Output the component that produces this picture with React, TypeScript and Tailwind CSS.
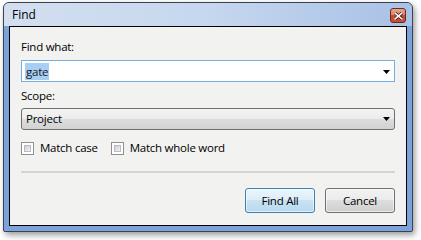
import React from 'react';

const font = { fontFamily: '"Open Sans", "Noto Sans", sans-serif' };

const Caret = () => (
  <svg width="7" height="4" viewBox="0 0 7 4" className="shrink-0">
    <path d="M0 0h7L3.5 4z" fill="#000" />
  </svg>
);

const CheckBox = ({ label }: { label: string }) => (
  <label className="flex items-center gap-[6px]">
    <span className="w-[13px] h-[13px] border border-[#8e8f8f] bg-white p-[2px] flex">
      <span className="flex-1 border border-[#b8bcc2] bg-gradient-to-br from-[#c9cdd3] to-[#f4f4f4]" />
    </span>
    <span className="text-[11.5px] tracking-[-0.25px] leading-[16px] text-black">{label}</span>
  </label>
);

export default function App() {
  return (
    <div className="w-[421px] h-[240px] bg-white pt-[2px] pl-[3px]" style={font}>
      <div className="w-[410px] h-[230px] border border-[#3a4250] rounded-t-[6px] rounded-b-[2px] bg-[#7ca2d9] shadow-[2px_3px_6px_rgba(0,0,0,0.4)] flex flex-col overflow-hidden">
        {/* title bar */}
        <div className="h-[23px] flex items-start pl-[8px] pr-[6px] bg-gradient-to-r from-[#d3dff0] via-[#c6d7ee] to-[#a9c1e6]">
          <span className="text-[12px] leading-[16px] text-black mt-[4px]">Find</span>
          <div className="ml-auto mt-[5px] w-[16px] h-[15px] rounded-[3px] border border-[#6a2b1f] bg-[linear-gradient(#eba58f,#de7a60_50%,#cc4a2e_50%,#c94f33)] flex items-center justify-center">
            <svg width="9" height="8" viewBox="0 0 9 8">
              <path d="M1 1l7 6M8 1L1 7" stroke="#3a1a12" strokeWidth="3" strokeLinecap="square" />
              <path d="M1 1l7 6M8 1L1 7" stroke="#fff" strokeWidth="1.6" strokeLinecap="square" />
            </svg>
          </div>
        </div>
        {/* client */}
        <div className="flex-1 px-[5px] pb-[5px]">
          <div className="h-full border border-black bg-[#f2f2f0] px-[11px] pt-[12px] flex flex-col text-[11.5px] tracking-[-0.25px]">
            <div className="leading-[16px] text-black">Find what:</div>
            <div className="mt-[5px] h-[22px] border border-[#76acdf] bg-white flex items-center pl-[3px] pr-[3px]">
              <span className="leading-[17px] bg-[#a8cef1] text-[#101828] px-[1px]">gate</span>
              <div className="ml-auto mr-[1px] mt-[1px]"><Caret /></div>
            </div>
            <div className="mt-[6px] leading-[16px] text-black">Scope:</div>
            <div className="mt-[4px] h-[22px] rounded-[3px] border border-[#707070] bg-[linear-gradient(#f4f4f4,#ebebeb_50%,#dddddd_50%,#d2d2d2)] flex items-center pl-[4px] pr-[4px]">
              <span className="leading-[16px] text-black">Project</span>
              <div className="ml-auto"><Caret /></div>
            </div>
            <div className="mt-[10px] flex items-center gap-[13px]">
              <CheckBox label="Match case" />
              <CheckBox label="Match whole word" />
            </div>
            <div className="mt-[15px] h-[2px] bg-[#d4d4d2]" />
            <div className="mt-[15px] flex justify-end gap-[10px]">
              <button className="w-[70px] h-[25px] rounded-[3px] border border-[#3c7fb1] bg-[linear-gradient(#eaf5fc,#dcedf9_50%,#c8e2f4_50%,#b8d8ee)] text-black shadow-[inset_0_0_0_1px_rgba(255,255,255,0.6)]">
                Find All
              </button>
              <button className="w-[70px] h-[25px] rounded-[3px] border border-[#707070] bg-[linear-gradient(#f2f2f2,#ebebeb_50%,#dddddd_50%,#cfcfcf)] text-black shadow-[inset_0_0_0_1px_rgba(255,255,255,0.6)]">
                Cancel
              </button>
            </div>
          </div>
        </div>
      </div>
    </div>
  );
}
